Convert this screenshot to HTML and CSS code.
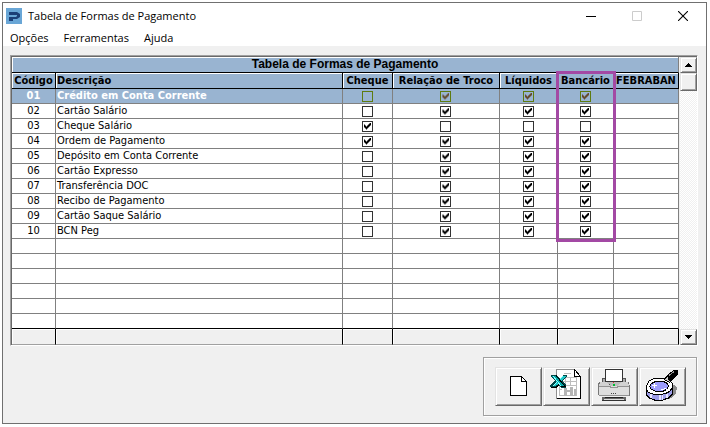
FILE: index.html
```html
<!DOCTYPE html>
<html lang="pt-BR">
<head>
<meta charset="utf-8">
<title>Tabela de Formas de Pagamento</title>
<link rel="stylesheet" href="styles.css">
</head>
<body>
<main class="window">
  <header class="titlebar">
    <svg class="logo" viewBox="0 0 16 16" aria-hidden="true">
      <rect width="16" height="16" fill="#69a6d6"/>
      <path d="M3 4h8l3 2v3l-3 2H7v2H3V9h7l1-1V7H3z" fill="#1c3f77"/>
    </svg>
    <h1 class="title">Tabela de Formas de Pagamento</h1>
    <button class="caption" type="button" aria-label="Minimizar"><svg viewBox="0 0 10 10"><path d="M0 5.5h10" stroke="#000"/></svg></button>
    <button class="caption" type="button" aria-label="Maximizar" disabled><svg viewBox="0 0 10 10"><path d="M.5.5h9v9h-9z" stroke="#ccc" fill="none"/></svg></button>
    <button class="caption" type="button" aria-label="Fechar"><svg viewBox="0 0 10 10"><path d="M0 0l10 10M10 0L0 10" stroke="#000" stroke-width="1.1"/></svg></button>
  </header>
  <nav class="menu">
    <button type="button">Opções</button>
    <button type="button">Ferramentas</button>
    <button type="button">Ajuda</button>
  </nav>

  <section class="grid">
    <table class="payments">
      <colgroup>
        <col class="c-code"><col><col class="c-cheque"><col class="c-troco"><col class="c-liq"><col class="c-banc"><col class="c-feb">
      </colgroup>
      <thead>
        <tr class="band"><th colspan="7">Tabela de Formas de Pagamento</th></tr>
        <tr class="heads">
          <th>Código</th><th class="left">Descrição</th><th>Cheque</th><th>Relação de Troco</th><th>Líquidos</th><th>Bancário</th><th>FEBRABAN</th>
        </tr>
      </thead>
      <tbody id="rows"></tbody>
      <tfoot>
        <tr><td></td><td></td><td></td><td></td><td></td><td></td><td></td></tr>
      </tfoot>
    </table>
    <div class="scrollbar">
      <button class="scroll-button" type="button" aria-label="Rolar para cima"><svg viewBox="0 0 7 4"><path d="M3 0h1v1h1v1h1v1h1v1H0V3h1V2h1V1h1z"/></svg></button>
      <div class="thumb"></div>
      <div class="track"></div>
      <button class="scroll-button" type="button" aria-label="Rolar para baixo"><svg viewBox="0 0 7 4"><path d="M0 0h7v1H6v1H5v1H4v1H3V3H2V2H1V1H0z"/></svg></button>
    </div>
    <div class="highlight"></div>
  </section>

  <footer class="toolbar">
    <button class="tool" type="button" aria-label="Novo">
      <svg viewBox="0 0 33 35">
        <path d="M8.500 7.500h11l5 5v14h-16z" fill="#fff" stroke="#000"/>
        <path d="M19.500 7.500v5h5" fill="none" stroke="#000"/>
      </svg>
    </button>
    <button class="tool" type="button" aria-label="Exportar para Excel">
      <svg viewBox="0 0 33 35">
        <path d="M6.500.5h18l6 7v22h-24z" fill="#fff" stroke="#909090"/>
        <path d="M7 29.500h23.500V7.500l-6-7v7h6" fill="none" stroke="#000"/>
        <path d="M14 4.500h7M12 8.500h15M9 12.500h18M9 16.500h18M9 20.500h3M9 26.500h18M9.500 16v11M15.500 8v10M20.500 8v9M26.500 8v19" fill="none" stroke="#bdbdbd"/>
        <path d="M14 19h3v8h-3zM20 18h3v9h-3zM24 20h2v7h-2zM17 21h3v2h-3z" fill="#b5b5b5"/>
        <path d="M1 6h6l3 4 3-4h4v2l-5 4 4 4v3h-5l-3-4-3 3H0v-2l5-4-4-4z" fill="#004848"/>
        <path d="M13 7h3l-9 9-2 1H2l5-5z" fill="#20c8c8"/>
        <path d="M2 7h4l8 10h-4z" fill="#00a5a5"/>
        <path d="M3 7l8 10M13 7l-4 4M7 13l-4 4" fill="none" stroke="#8ff"/>
        <path d="M6 6.500l9 11h-4M1 18.500h5l3-3" fill="none" stroke="#000"/>
      </svg>
    </button>
    <button class="tool" type="button" aria-label="Imprimir">
      <svg viewBox="0 0 33 35">
        <path d="M4.500 13V9.500h3V13M24.500 13V9.500h3V13" fill="#aaa" stroke="#555"/>
        <path d="M7.500.5h17v12h-17z" fill="#fff" stroke="#333"/>
        <path d="M1 13h30v2l1 2v9l-1 1H1l-1-1V16z" fill="#777"/>
        <path d="M2 13h28l1 4H1z" fill="#d2d2d2"/>
        <path d="M1 17h30v9H1z" fill="#dedede"/>
        <path d="M9 13h14l-3 4h-8z" fill="#bcbcbc"/>
        <path d="M1 17.500h11l1 1h6l1-1h11" fill="none" stroke="#929292"/>
        <path d="M1 26h30v1H1z" fill="#929292"/>
        <path d="M13 24h1v1h-1zM15 24h1v1h-1zM17 24h1v1h-1z" fill="#444"/>
        <path d="M4 28h24v3H4z" fill="#666"/>
        <path d="M7 28h18v1H7z" fill="#222"/>
        <path d="M6 30h20v1H6z" fill="#ddd"/>
        <path d="M4 31h24v1H4z" fill="#333"/>
        <path d="M15 13h1v1h-1z" fill="#e33"/>
        <path d="M15 15h2v2h-2z" fill="#0b3"/>
        <path d="M11 15h1v1h-1z" fill="#555"/>
      </svg>
    </button>
    <button class="tool" type="button" aria-label="Pesquisar">
      <svg viewBox="0 0 33 35">
        <path d="M26 16h3l2 3-1 5-3 4-4 2-2-3z" fill="#8a8a8a"/>
        <path d="M.5 20v6l3 3 5 2h8l6-2 4-4v-7z" fill="#9c9ce8" stroke="#000"/>
        <path d="M4 25h2v4H4zM13 26h2v5h-2zM16 26h1v5h-1zM20 25h2v4h-2z" fill="#e6e6ff"/>
        <path d="M8.500 9.500h10l5 2 3 3v4l-3 4-4 2-5 1h-5l-5-1-3-2-1-3v-3l3-5z" fill="#fff" stroke="#000"/>
        <path d="M9.500 12.500h8l4 2 1 3-2 3-4 2h-6l-5-2-2-3 2-3z" fill="#9c9cfc" stroke="#000"/>
        <path d="M8.500 14v5M6 16.500h5M15 20.500h3M18 19.500h2" fill="none" stroke="#fff"/>
        <path d="M18.500 10.500l3-4 3 2 1 3-2 2z" fill="#c8c8c8" stroke="#000"/>
        <path d="M21 6l7-5h3l1 1v4l-7 6h-2z" fill="#000"/>
        <path d="M23 6.500l5-4" stroke="#999"/>
      </svg>
    </button>
  </footer>
</main>
<script src="rows.js"></script>
</body>
</html>
```
FILE: rows.js
```js
// Each entry: code, description, and the Cheque / Troco / Líquidos / Bancário flags.
const methods = [
  ["01", "Crédito em Conta Corrente", 0, 1, 1, 1],
  ["02", "Cartão Salário", 0, 1, 1, 1],
  ["03", "Cheque Salário", 1, 0, 0, 0],
  ["04", "Ordem de Pagamento", 1, 1, 1, 1],
  ["05", "Depósito em Conta Corrente", 0, 1, 1, 1],
  ["06", "Cartão Expresso", 0, 1, 1, 1],
  ["07", "Transferência DOC", 0, 1, 1, 1],
  ["08", "Recibo de Pagamento", 0, 1, 1, 1],
  ["09", "Cartão Saque Salário", 0, 1, 1, 1],
  ["10", "BCN Peg", 0, 1, 1, 1]
];
const flags = ["Cheque", "Relação de Troco", "Líquidos", "Bancário"];
const body = document.getElementById("rows");
const emptyRows = 6;

methods.forEach(([code, name, ...values], index) => {
  const row = body.insertRow();
  if (index === 0) row.className = "selected";
  const codeCell = row.insertCell();
  codeCell.textContent = code;
  const nameCell = row.insertCell();
  nameCell.className = "left";
  nameCell.textContent = name;
  values.forEach((value, i) => {
    const box = document.createElement("input");
    box.type = "checkbox";
    box.checked = Boolean(value);
    box.setAttribute("aria-label", `${flags[i]}: ${name}`);
    row.insertCell().append(box);
  });
  row.insertCell();
});

for (let i = 0; i < emptyRows; i++) {
  const row = body.insertRow();
  for (let j = 0; j < 7; j++) row.insertCell();
}
```
FILE: styles.css
```css
* { box-sizing: border-box; }

body {
  margin: 0;
  padding: 2px 3px 3px 2px;
  background: #fff;
  color: #000;
  font-family: "Open Sans", "Noto Sans", sans-serif;
  font-size: 11px;
}

button {
  padding: 0;
  border: 0;
  background: none;
  color: inherit;
  font: inherit;
}

svg { display: block; }

.window {
  border: 1px solid #707070;
  background: #f0f0f0;
}

.titlebar {
  display: flex;
  align-items: center;
  height: 25px;
  padding-left: 3px;
  background: #fff;
}

.logo { width: 16px; height: 16px; }

.title {
  flex: 1;
  margin: 0 0 0 6px;
  font-size: 11px;
  font-weight: 400;
}

.caption {
  display: grid;
  place-items: center;
  width: 46px;
  height: 25px;
}

.caption svg { width: 10px; height: 10px; }

.menu {
  display: flex;
  gap: 15px;
  height: 18px;
  padding-left: 7px;
  background: #fff;
}

.menu button { line-height: 20px; height: 18px; }

.grid {
  position: relative;
  display: flex;
  margin: 9px 8px 0 7px;
  border: 1px solid;
  border-color: #a0a0a0 #fff #fff #a0a0a0;
  box-shadow: inset 1px 1px #696969;
  padding: 1px 0 0 1px;
}

.payments {
  flex: 1;
  width: 0;
  table-layout: fixed;
  border-collapse: separate;
  border-spacing: 0;
  background: #fff;
  font-family: "DejaVu Sans Condensed", "DejaVu Sans", sans-serif;
  font-size: 11px;
  line-height: 14px;
}

.c-code { width: 44px; }
.c-cheque { width: 50px; }
.c-troco { width: 107px; }
.c-liq { width: 58px; }
.c-banc { width: 56px; }
.c-feb { width: 65px; }

.payments th,
.payments td {
  height: 15px;
  padding: 0;
  overflow: hidden;
  text-align: center;
  white-space: nowrap;
}

.payments td {
  border-right: 1px solid #808080;
  border-bottom: 1px solid #808080;
}

.payments .left { padding-left: 1px; text-align: left; }

.payments th {
  height: 16px;
  border-right: 1px solid #000;
  border-bottom: 1px solid #000;
  background: #99b4d1;
  box-shadow: inset 1px 1px #fff;
  line-height: 15px;
}

.payments .band th {
  border-right-color: #808080;
  font-family: "Liberation Sans", sans-serif;
  font-size: 12px;
}

.payments tbody tr:last-child td { border-bottom-color: #000; }

.payments .selected td {
  border-right-color: #808080;
  background: #99b4d1;
  color: #fff;
  font-weight: 700;
}

.payments tfoot td {
  height: 16px;
  border-right-color: #000;
  border-bottom-color: #a0a0a0;
  background: #f0f0f0;
  box-shadow: inset 1px 1px #fff;
}

.payments input {
  appearance: none;
  display: block;
  width: 11px;
  height: 11px;
  margin: 0 auto;
  border: 1px solid #333;
  background: #fff;
}

.payments input:checked::before {
  content: "";
  display: block;
  width: 7px;
  height: 7px;
  margin: 1px;
  background: #000;
  clip-path: polygon(
    0 2px, 1px 2px, 1px 3px, 2px 3px, 2px 4px, 3px 4px, 3px 3px, 4px 3px, 4px 2px, 5px 2px, 5px 1px, 6px 1px, 6px 0, 7px 0,
    7px 3px, 6px 3px, 6px 4px, 5px 4px, 5px 5px, 4px 5px, 4px 6px, 3px 6px, 3px 7px, 2px 7px, 2px 6px, 1px 6px, 1px 5px, 0 5px);
}

.payments .selected input { border-color: #5e7b10; background: #99b4d1; }
.payments .selected input:checked::before { background: #664b2e; }

.scrollbar {
  display: flex;
  flex-direction: column;
  width: 18px;
  padding-left: 1px;
}

.scroll-button,
.thumb,
.tool {
  border: 1px solid;
  border-color: #e3e3e3 #696969 #696969 #e3e3e3;
  background: #f0f0f0;
  box-shadow: inset 1px 1px #fff, inset -1px -1px #a0a0a0;
}

.scroll-button {
  display: grid;
  place-items: center;
  height: 16px;
}

.scroll-button svg { width: 7px; height: 4px; }

.thumb { height: 18px; }

.track {
  flex: 1;
  background: repeating-conic-gradient(#fff 0 25%, #f0f0f0 0 50%) 0 0 / 2px 2px;
}

.highlight {
  position: absolute;
  top: 15px;
  right: 81px;
  bottom: 103px;
  width: 60px;
  border: 3px solid #a349a4;
  pointer-events: none;
}

.toolbar {
  display: flex;
  gap: 1px;
  width: fit-content;
  margin: 11px 9px 7px auto;
  padding: 9px 10px 9px 11px;
  border: 1px solid #a0a0a0;
  box-shadow: inset 1px 1px #fff, 1px 1px #fff;
}

.tool {
  display: grid;
  place-items: center;
  width: 47px;
  height: 39px;
}

.tool svg { width: 33px; height: 35px; shape-rendering: crispEdges; }
```
